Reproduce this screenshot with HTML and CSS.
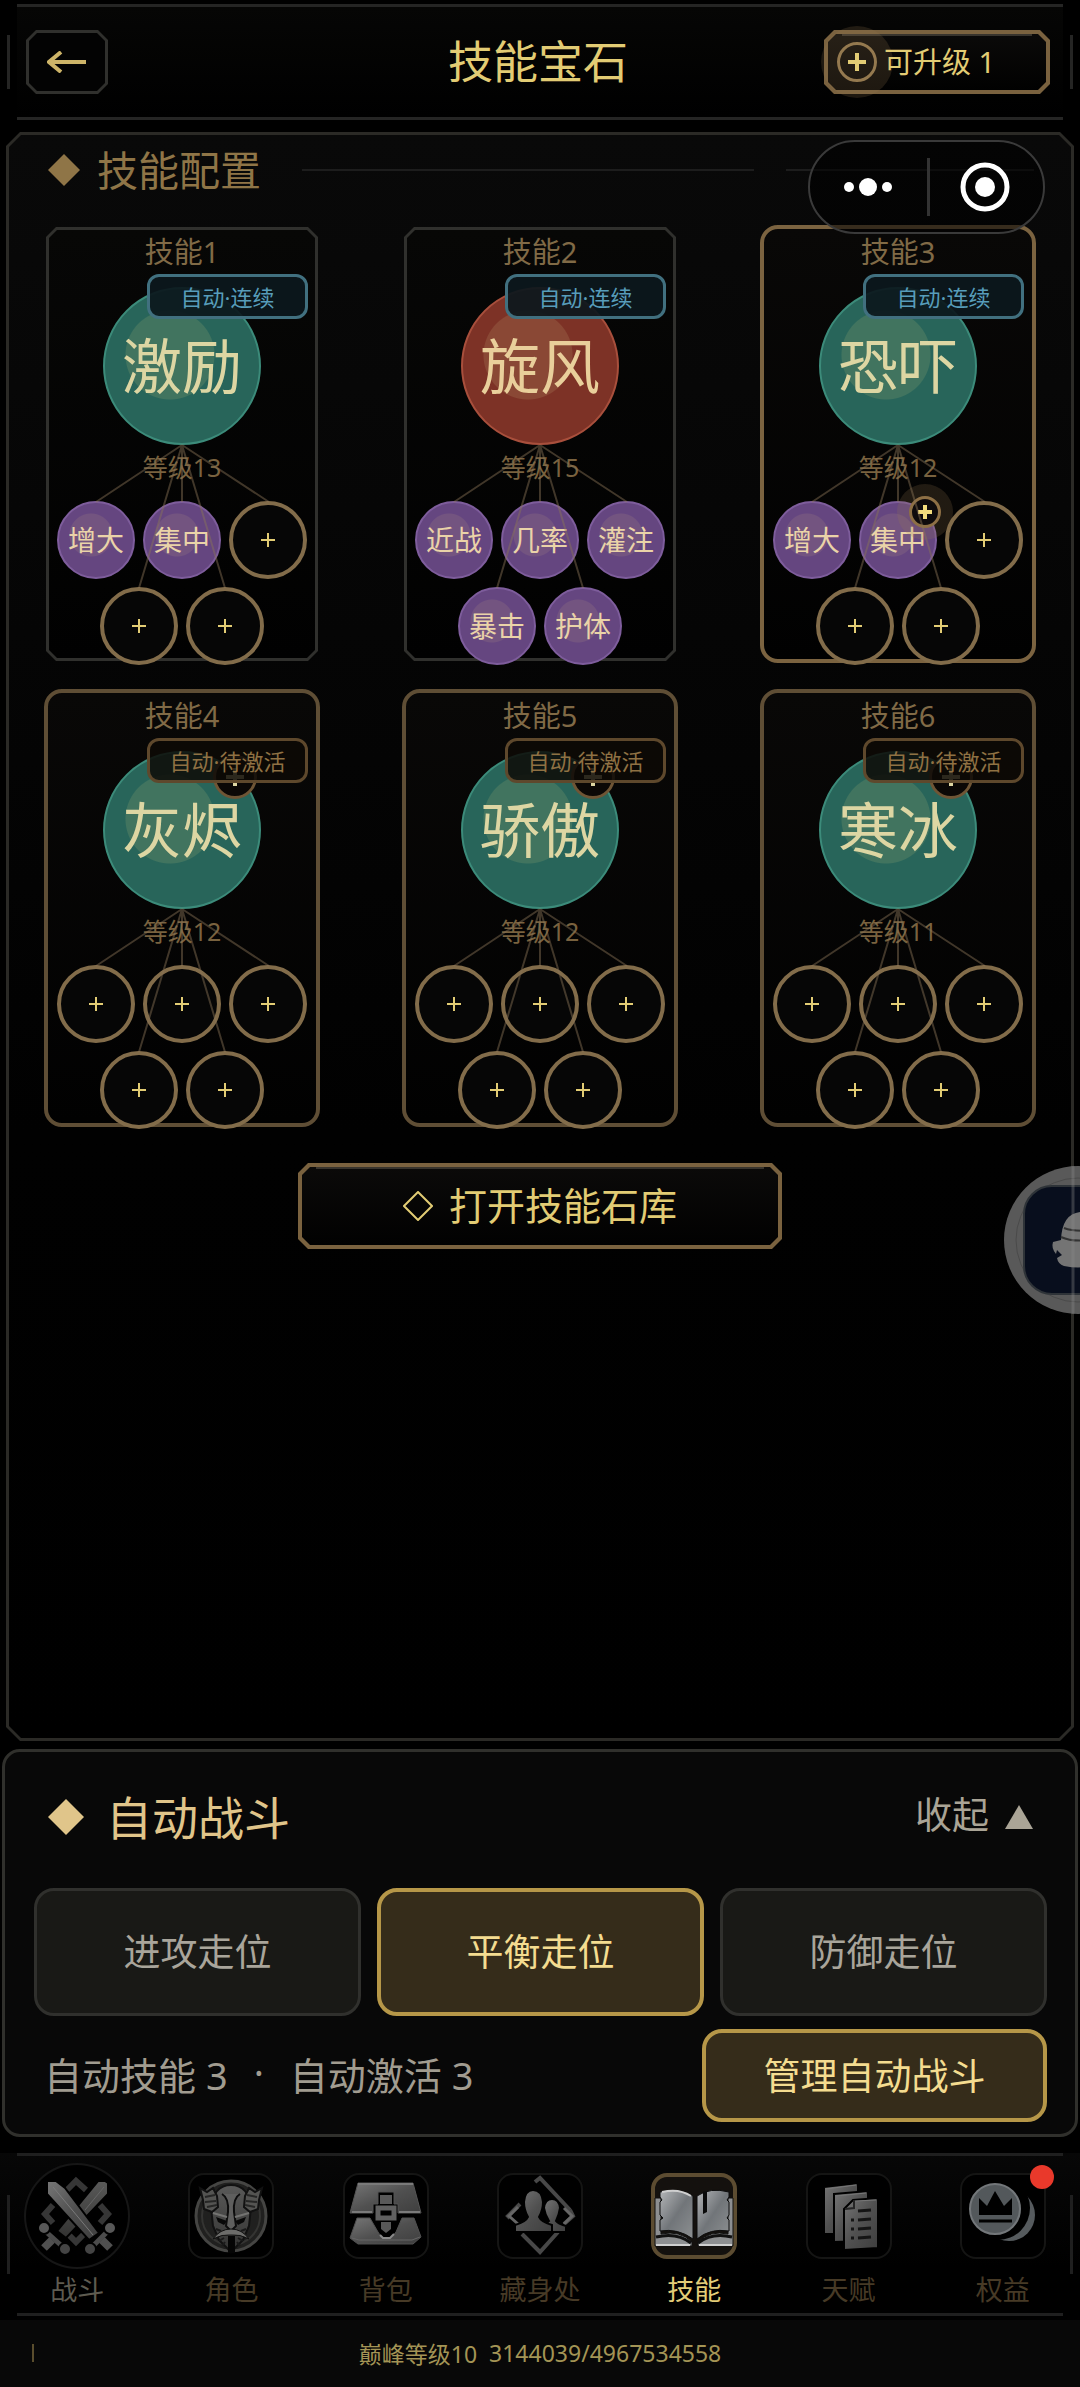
FILE: index.html
```html
<!DOCTYPE html>
<html lang="zh-CN">
<head>
  <meta charset="UTF-8" />
  <meta name="viewport" content="width=device-width, initial-scale=1" />
  <title>技能宝石</title>
  <link rel="stylesheet" href="styles.css">
</head>
<body>

  <!-- shared shapes -->
  <svg class="defs" aria-hidden="true">
    <defs>
      <linearGradient id="metal" x1="0" y1="0" x2="1" y2="1">
        <stop offset="0" stop-color="#767676" />
        <stop offset="0.5" stop-color="#505050" />
        <stop offset="1" stop-color="#3e3e3e" />
      </linearGradient>
      <linearGradient id="dim" x1="0" y1="0" x2="0" y2="1">
        <stop offset="0" stop-color="#5a5a59" />
        <stop offset="1" stop-color="#323231" />
      </linearGradient>
      <linearGradient id="bright" x1="0" y1="0" x2="1" y2="1">
        <stop offset="0" stop-color="#b4b6b8" />
        <stop offset="0.5" stop-color="#717579" />
        <stop offset="1" stop-color="#8d9092" />
      </linearGradient>
    </defs>
    <symbol id="links" viewBox="0 0 272 434">
      <path d="M136 218L50 275M136 218L223 275M136 218V275M136 218L93 361M136 218L179 361" fill="none" stroke="#8a7457" stroke-opacity="0.46" stroke-width="2" />
    </symbol>
    <symbol id="plus" viewBox="0 0 14 14">
      <path d="M7 0V14M0 7H14" fill="none" stroke="currentColor" stroke-width="2" />
    </symbol>
    <symbol id="plus-bold" viewBox="0 0 14 14">
      <path d="M7 0V14M0 7H14" fill="none" stroke="currentColor" stroke-width="4" />
    </symbol>
    <symbol id="plus-mid" viewBox="0 0 18 18">
      <path d="M9 0V18M0 9H18" fill="none" stroke="currentColor" stroke-width="4" />
    </symbol>
  </svg>

  <div class="app">

    <header class="topbar">
      <button class="back cut" aria-label="返回">
        <svg width="40" height="22" viewBox="0 0 40 22"><path d="M39 11H2M14 1L2 11L14 21" fill="none" stroke="currentColor" stroke-width="4" /></svg>
      </button>
      <h1>技能宝石</h1>
      <button class="upgrade cut gold">
        <span class="up-mark"><svg width="18" height="18"><use href="#plus-mid" /></svg></span>
        <span class="label">可升级 1</span>
      </button>
    </header>

    <main class="panel cut">
      <div class="section-head">
        <svg width="32" height="32" viewBox="0 0 32 32"><path d="M16 0L32 16L16 32L0 16Z" fill="currentColor" /></svg>
        <h2>技能配置</h2>
        <span class="rule"></span>
        <span class="rule short"></span>
      </div>

      <div class="cards">

        <section class="card cut">
          <h3>技能1</h3>
          <span class="badge auto">自动·连续</span>
          <button class="gem green">激励</button>
          <p class="level">等级13</p>
          <div class="sockets">
            <div class="row">
              <button class="socket filled">增大</button>
              <button class="socket filled">集中</button>
              <button class="socket" aria-label="添加"><svg width="14" height="14"><use href="#plus" /></svg></button>
            </div>
            <div class="row">
              <button class="socket" aria-label="添加"><svg width="14" height="14"><use href="#plus" /></svg></button>
              <button class="socket" aria-label="添加"><svg width="14" height="14"><use href="#plus" /></svg></button>
            </div>
          </div>
          <svg class="links"><use href="#links" /></svg>
        </section>

        <section class="card cut">
          <h3>技能2</h3>
          <span class="badge auto">自动·连续</span>
          <button class="gem red">旋风</button>
          <p class="level">等级15</p>
          <div class="sockets">
            <div class="row">
              <button class="socket filled">近战</button>
              <button class="socket filled">几率</button>
              <button class="socket filled">灌注</button>
            </div>
            <div class="row">
              <button class="socket filled">暴击</button>
              <button class="socket filled">护体</button>
            </div>
          </div>
          <svg class="links"><use href="#links" /></svg>
        </section>

        <section class="card round hot">
          <h3>技能3</h3>
          <span class="badge auto">自动·连续</span>
          <button class="gem green">恐吓</button>
          <p class="level">等级12</p>
          <div class="sockets">
            <div class="row">
              <button class="socket filled">增大</button>
              <button class="socket filled">集中
                <span class="socket-up"><svg width="14" height="14"><use href="#plus-bold" /></svg></span>
              </button>
              <button class="socket" aria-label="添加"><svg width="14" height="14"><use href="#plus" /></svg></button>
            </div>
            <div class="row">
              <button class="socket" aria-label="添加"><svg width="14" height="14"><use href="#plus" /></svg></button>
              <button class="socket" aria-label="添加"><svg width="14" height="14"><use href="#plus" /></svg></button>
            </div>
          </div>
          <svg class="links"><use href="#links" /></svg>
        </section>

        <section class="card round">
          <h3>技能4</h3>
          <span class="badge">自动·待激活</span>
          <button class="gem green">灰烬
            <span class="gem-up"><svg width="18" height="18"><use href="#plus-mid" /></svg></span>
          </button>
          <p class="level">等级12</p>
          <div class="sockets">
            <div class="row">
              <button class="socket" aria-label="添加"><svg width="14" height="14"><use href="#plus" /></svg></button>
              <button class="socket" aria-label="添加"><svg width="14" height="14"><use href="#plus" /></svg></button>
              <button class="socket" aria-label="添加"><svg width="14" height="14"><use href="#plus" /></svg></button>
            </div>
            <div class="row">
              <button class="socket" aria-label="添加"><svg width="14" height="14"><use href="#plus" /></svg></button>
              <button class="socket" aria-label="添加"><svg width="14" height="14"><use href="#plus" /></svg></button>
            </div>
          </div>
          <svg class="links"><use href="#links" /></svg>
        </section>

        <section class="card round">
          <h3>技能5</h3>
          <span class="badge">自动·待激活</span>
          <button class="gem green">骄傲
            <span class="gem-up"><svg width="18" height="18"><use href="#plus-mid" /></svg></span>
          </button>
          <p class="level">等级12</p>
          <div class="sockets">
            <div class="row">
              <button class="socket" aria-label="添加"><svg width="14" height="14"><use href="#plus" /></svg></button>
              <button class="socket" aria-label="添加"><svg width="14" height="14"><use href="#plus" /></svg></button>
              <button class="socket" aria-label="添加"><svg width="14" height="14"><use href="#plus" /></svg></button>
            </div>
            <div class="row">
              <button class="socket" aria-label="添加"><svg width="14" height="14"><use href="#plus" /></svg></button>
              <button class="socket" aria-label="添加"><svg width="14" height="14"><use href="#plus" /></svg></button>
            </div>
          </div>
          <svg class="links"><use href="#links" /></svg>
        </section>

        <section class="card round">
          <h3>技能6</h3>
          <span class="badge">自动·待激活</span>
          <button class="gem green">寒冰
            <span class="gem-up"><svg width="18" height="18"><use href="#plus-mid" /></svg></span>
          </button>
          <p class="level">等级11</p>
          <div class="sockets">
            <div class="row">
              <button class="socket" aria-label="添加"><svg width="14" height="14"><use href="#plus" /></svg></button>
              <button class="socket" aria-label="添加"><svg width="14" height="14"><use href="#plus" /></svg></button>
              <button class="socket" aria-label="添加"><svg width="14" height="14"><use href="#plus" /></svg></button>
            </div>
            <div class="row">
              <button class="socket" aria-label="添加"><svg width="14" height="14"><use href="#plus" /></svg></button>
              <button class="socket" aria-label="添加"><svg width="14" height="14"><use href="#plus" /></svg></button>
            </div>
          </div>
          <svg class="links"><use href="#links" /></svg>
        </section>

      </div>

      <button class="open-store cut gold">
        <svg width="30" height="30" viewBox="0 0 30 30"><path d="M15 1L29 15L15 29L1 15Z" fill="none" stroke="currentColor" stroke-width="2" /></svg>
        <span class="label">打开技能石库</span>
      </button>
    </main>

    <section class="battle">
      <div class="battle-head">
        <svg width="36" height="36" viewBox="0 0 36 36"><path d="M18 0L36 18L18 36L0 18Z" fill="currentColor" /></svg>
        <h2>自动战斗</h2>
        <button class="collapse"><span class="label">收起</span>
          <svg width="28" height="24" viewBox="0 0 28 24"><path d="M14 0L28 24H0Z" fill="currentColor" /></svg>
        </button>
      </div>
      <div class="stances">
        <button class="stance">进攻走位</button>
        <button class="stance active">平衡走位</button>
        <button class="stance">防御走位</button>
      </div>
      <div class="battle-foot">
        <p><span>自动技能 3</span><span>·</span><span>自动激活 3</span></p>
        <button class="manage">管理自动战斗</button>
      </div>
    </section>

    <nav class="tabs">
      <a href="#battle" class="tab first">
        <span class="tab-icon">
          <svg width="84" height="84" viewBox="0 0 84 84">
            <path d="M32 16L41 7L51 16M18 31L10 40L18 49M65 31L73 40L65 49M32 59L41 68L50 59" fill="none" stroke="#363636" stroke-width="6" />
            <g stroke="#000" stroke-width="2">
              <path d="M73 9V20L31 64L22 57L63 7L70 7Z" fill="url(#dim)" />
              <path d="M9 56L29 74" stroke="#4c4c4c" stroke-width="5" />
              <circle cx="9" cy="54" r="6" fill="#585858" /><circle cx="30" cy="75" r="6" fill="#444" />
              <path d="M17 66L9 74" stroke="#505050" stroke-width="8" />
              <path d="M12 7H21L30 14L64 59L54 66L12 20Z" fill="url(#metal)" />
              <path d="M56 74L74 56" stroke="#4c4c4c" stroke-width="5" />
              <circle cx="55" cy="75" r="6" fill="#444" /><circle cx="75" cy="54" r="6" fill="#585858" />
              <path d="M67 66L75 74" stroke="#505050" stroke-width="8" />
            </g>
            <path d="M18 13L58 61" stroke="#7a7a7a" stroke-width="1" />
            <path d="M69 13L50 36" stroke="#666" stroke-width="1" />
          </svg>
        </span>
        战斗
      </a>
      <a href="#role" class="tab">
        <span class="tab-icon">
          <svg width="84" height="84" viewBox="0 0 84 84">
            <circle cx="42" cy="42" r="35" fill="#20201f" stroke="#454543" stroke-width="3" />
            <circle cx="42" cy="42" r="29" fill="none" stroke="#343432" stroke-width="2" />
            <path d="M42 11C54 11 61 20 62 33L60 52L54 66L42 78L30 66L24 52L22 33C23 20 30 11 42 11Z" fill="url(#dim)" stroke="#111" stroke-width="2" />
            <path d="M11 14L18 18L24 14L28 22L29 33L23 38L15 35L14 26ZM73 14L66 18L60 14L56 22L55 33L61 38L69 35L70 26Z" fill="#545452" stroke="#111" stroke-width="2" />
            <path d="M16 23L26 21M16 28L27 27M18 33L28 31M68 23L58 21M68 28L57 27M66 33L56 31" stroke="#262625" stroke-width="2" />
            <path d="M33 20Q40 24 39 38L37 52L42 57L47 52L45 38Q44 24 51 20" fill="#5f5f5e" stroke="#0d0d0d" stroke-width="2" />
            <path d="M27 43L38 47L35 51L29 48ZM57 43L46 47L49 51L55 48Z" fill="#080808" />
            <path d="M24 39L38 43M60 39L46 43" stroke="#737371" stroke-width="2" />
            <path d="M24 65Q31 55 42 55Q53 55 60 65Q51 60 42 61Q33 60 24 65Z" fill="#6c6c6a" stroke="#111" stroke-width="1" />
            <path d="M27 55L32 57M57 55L52 57M30 67L35 64M54 67L49 64M33 72L36 68M51 72L48 68" stroke="#1a1a1a" stroke-width="2" />
            <path d="M39 62H46V79H39Z" fill="#050505" />
          </svg>
        </span>
        角色
      </a>
      <a href="#bag" class="tab">
        <span class="tab-icon">
          <svg width="84" height="84" viewBox="0 0 84 84">
            <path d="M14 9H69L77 39H54V30H50V18H34V30H29V39H6Z" fill="url(#metal)" stroke="#555" stroke-width="1" />
            <path d="M13 44H26L34 58L38 64H47L52 58L58 44H70L77 63L69 70H14L6 64Z" fill="url(#metal)" stroke="#505050" stroke-width="1" />
            <path d="M14 10H69M8 38H28M55 38H76" fill="none" stroke="#7a7a7a" stroke-width="2" />
            <path d="M8 64L15 66H68L76 63" fill="none" stroke="#666" stroke-width="1" />
            <path d="M36 21H48V30H36ZM37 48H47V55L42 59L37 55Z" fill="#595959" />
            <path d="M34 34H50V44H34Z" fill="#000" stroke="#606060" stroke-width="5" />
            <path d="M36 61L39 64H46L50 60" fill="none" stroke="#8a8a8a" stroke-width="2" />
          </svg>
        </span>
        背包
      </a>
      <a href="#hideout" class="tab">
        <span class="tab-icon">
          <svg width="84" height="84" viewBox="0 0 84 84">
            <path d="M37 8L42 4L72 36M12 44L10 42L22 30M72 36L75 42L66 50M60 58L42 78L24 60" fill="none" stroke="#484848" stroke-width="4" />
            <path d="M20 33L11 42L20 50M66 34L74 42L66 50" fill="none" stroke="#666" stroke-width="3" />
            <g fill="url(#metal)" stroke="#000" stroke-width="2">
              <path d="M46 58Q47 50 51 47Q47 41 46 34Q47 25 54 25Q61 25 62 34Q61 41 58 47Q60 50 68 52V58Z" />
              <path d="M17 58V51Q28 48 30 43Q26 36 26 28Q27 16 35 16Q44 16 45 28Q45 36 41 43Q43 48 54 51V58Z" />
            </g>
          </svg>
        </span>
        藏身处
      </a>
      <a href="#skill" class="tab active" aria-current="page">
        <span class="tab-icon">
          <svg width="84" height="84" viewBox="0 0 84 84">
            <path d="M3 24H9V60Q28 56 40 68V72H3ZM81 24H76V60Q58 56 46 68V72H81Z" fill="#8d8f91" stroke="#111" stroke-width="1" />
            <path d="M8 18Q27 13 41 22V65Q26 54 8 57V46L11 44L8 41V28L10 26L8 23Z" fill="url(#bright)" stroke="#0d0d0d" stroke-width="1" />
            <path d="M77 18Q58 13 45 22V65Q58 54 77 57V46L75 44L77 41V28L75 26L77 23Z" fill="url(#bright)" stroke="#0d0d0d" stroke-width="1" />
            <path d="M51 18L55 17V38L51 40Z" fill="#0a0a0a" />
            <path d="M4 63Q25 58 39 69M80 63Q60 58 46 69" fill="none" stroke="#111" stroke-width="3" />
            <path d="M10 18Q27 14 39 22M4 71H38M47 71H80" fill="none" stroke="#cfcfcf" stroke-width="2" />
          </svg>
        </span>
        技能
      </a>
      <a href="#talent" class="tab">
        <span class="tab-icon">
          <svg width="84" height="84" viewBox="0 0 84 84">
            <g fill="url(#metal)" stroke="#000" stroke-width="2">
              <path d="M17 13L51 9V60L17 60Z" />
              <path d="M27 20L61 17V67L27 68Z" />
              <path d="M37 35L46 26L71 24V74L37 76Z" />
            </g>
            <path d="M38 35L47 34V26" fill="none" stroke="#252525" stroke-width="2" />
            <path d="M51 37L64 36M51 46L64 45M51 55L64 54M51 64L64 63M44 46H47M44 55H47M44 64H47" fill="none" stroke="#151515" stroke-width="3" />
            <path d="M19 15L49 11M29 22L59 19M48 27L69 26" stroke="#777" stroke-width="1" />
          </svg>
        </span>
        天赋
      </a>
      <a href="#vip" class="tab">
        <span class="tab-icon">
          <svg width="84" height="84" viewBox="0 0 84 84">
            <circle cx="48" cy="41" r="26" fill="#565b5e" />
            <circle cx="37" cy="34" r="32" fill="#000" />
            <circle cx="34" cy="35" r="25" fill="#53585b" stroke="#73777a" stroke-width="2" />
            <path d="M18 24L26 32L34 17L43 32L51 24V41H18Z" fill="#000" />
            <path d="M18 47H51" stroke="#000" stroke-width="3" />
          </svg>
          <span class="dot"></span>
        </span>
        权益
      </a>
    </nav>

    <footer class="status">
      <span class="tick"></span>
      <span>巅峰等级10</span>
      <span>3144039/4967534558</span>
    </footer>
  </div>

  <div class="capsule">
    <button aria-label="更多">
      <svg width="50" height="20" viewBox="0 0 50 20" fill="#fff"><circle cx="6" cy="10" r="5" /><circle cx="25" cy="10" r="9" /><circle cx="44" cy="10" r="5" /></svg>
    </button>
    <button aria-label="关闭">
      <svg width="50" height="50" viewBox="0 0 50 50"><circle cx="25" cy="25" r="22" fill="none" stroke="#fff" stroke-width="5" /><circle cx="25" cy="25" r="10" fill="#fff" /></svg>
    </button>
  </div>

  <button class="orb" aria-label="助手">
    <svg width="148" height="148" viewBox="0 0 148 148">
      <circle cx="74" cy="74" r="74" fill="#595959" />
      <circle cx="74" cy="74" r="62" fill="none" stroke="#4a4a4a" stroke-width="1" />
      <rect x="20" y="20" width="108" height="108" rx="28" fill="#080e1d" stroke="#2e3338" stroke-width="2" />
      <path d="M57 74Q58 48 76 46Q92 48 93 74L96 90L88 98Q80 104 60 100Q54 98 53 92L58 89L53 84L52 88Q47 82 49 76Z" fill="#747474" />
      <path d="M60 62Q70 66 90 64M57 71Q70 77 92 73" fill="none" stroke="#333" stroke-width="2" />
      <path d="M69 0V148" stroke="#8a8a8a" stroke-opacity="0.35" stroke-width="3" />
    </svg>
  </button>

</body>
</html>
```
FILE: styles.css
```css
* {
  box-sizing: border-box;
}

html, body {
  margin: 0;
  padding: 0;
  min-height: 100%;
  background: #000;
  font-family: "Noto Sans", "Noto Sans CJK SC", sans-serif;
  color: #e2cc74;
}

h1, h2, h3, p {
  margin: 0;
  font-weight: 400;
}

button {
  margin: 0;
  padding: 0;
  border: none;
  background: none;
  font-family: inherit;
  color: inherit;
  cursor: pointer;
}

svg {
  display: block;
  flex-shrink: 0;
}

.defs {
  position: absolute;
  width: 0;
  height: 0;
}

.app {
  display: flex;
  flex-direction: column;
  min-height: 100vh;
}

.label {
  padding-bottom: 4px;
}

/* frame with chamfered corners */
.cut {
  --cut: 10px;
  --inner: 8px;
  --line: 3px;
  --edge: #30302d;
  --fill: #030303;
  position: relative;
  isolation: isolate;
}

.cut::before, .cut::after {
  content: "";
  position: absolute;
  z-index: -1;
  clip-path: polygon(var(--c) 0, calc(100% - var(--c)) 0, 100% var(--c), 100% calc(100% - var(--c)), calc(100% - var(--c)) 100%, var(--c) 100%, 0 calc(100% - var(--c)), 0 var(--c));
}

.cut::before {
  --c: var(--cut);
  inset: 0;
  background: var(--edge);
}

.cut::after {
  --c: var(--inner);
  inset: var(--line);
  background: var(--fill);
}

.cut.gold {
  --line: 4px;
  --edge: #7a623f;
  --fill: linear-gradient(#38342d, #38342d) center top / calc(100% - 28px) 2px no-repeat, linear-gradient(#0b0a09, #010101);
}

/* top bar */
.topbar {
  position: relative;
  display: grid;
  grid-template-columns: 1fr auto 1fr;
  align-items: center;
  margin: 4px 17px 0;
  padding: 23px 13px 23px 9px;
  border-top: 3px solid #252524;
  border-bottom: 3px solid #252524;
  background: linear-gradient(#060605, #000);
}

.topbar::before, .topbar::after,
.tabs::before, .tabs::after {
  content: "";
  position: absolute;
  top: 28px;
  bottom: 28px;
  width: 3px;
  background: #252524;
}

.topbar::before {
  left: -10px;
}

.topbar::after {
  right: -10px;
}

.topbar h1 {
  font-size: 45px;
  line-height: 60px;
}

.back {
  display: flex;
  align-items: center;
  justify-content: center;
  width: 82px;
  height: 64px;
  color: #cdb468;
}

.upgrade {
  justify-self: end;
  display: flex;
  align-items: center;
  gap: 7px;
  width: 226px;
  height: 64px;
  padding-left: 13px;
  font-size: 29px;
}

.up-mark {
  display: flex;
  align-items: center;
  justify-content: center;
  width: 40px;
  height: 40px;
  border: 3px solid #94794f;
  border-radius: 50%;
  box-shadow: 0 0 0 16px rgba(148, 121, 79, 0.2);
  background: rgba(148, 121, 79, 0.2);
}

/* skill panel */
.panel {
  --cut: 14px;
  --inner: 12px;
  --edge: #2b2a26;
  --fill: linear-gradient(#090909, #050505 500px, #010101 1000px, #000);
  flex: 1;
  margin: 12px 6px 0;
  padding: 8px 40px 40px;
}

.section-head {
  display: flex;
  align-items: center;
  padding-left: 2px;
  color: #8f7547;
}

.section-head h2 {
  margin: 0 41px 0 17px;
  font-size: 41px;
  line-height: 60px;
}

.rule {
  flex: 1;
  height: 2px;
  background: #1d1d1d;
}

.rule.short {
  flex: none;
  width: 248px;
  margin-left: 32px;
}

.cards {
  display: grid;
  grid-template-columns: repeat(3, 272px);
  justify-content: space-between;
  row-gap: 30px;
  margin-top: 27px;
}

.card {
  position: relative;
  isolation: isolate;
  display: flex;
  flex-direction: column;
  align-items: center;
  padding-top: 9px;
}

.card.cut {
  --fill: linear-gradient(#070706, #010101);
}

.card.round::before {
  content: "";
  position: absolute;
  z-index: -1;
  inset: -2px;
  border: 4px solid #5f4e35;
  border-radius: 18px;
  background: linear-gradient(#090807, #010101);
}

.card.hot::before {
  border-color: #7b6340;
}

.card h3 {
  font-size: 29px;
  line-height: 32px;
  color: #806a46;
}

.badge {
  position: absolute;
  z-index: 2;
  top: 47px;
  right: 10px;
  display: flex;
  align-items: center;
  justify-content: center;
  width: 161px;
  height: 45px;
  padding-bottom: 2px;
  border: 3px solid #5e482c;
  border-radius: 12px;
  background: rgba(13, 9, 6, 0.85);
  font-size: 22px;
  color: #8f7143;
}

.badge.auto {
  border-color: #41707f;
  background: rgba(12, 24, 29, 0.93);
  color: #579dba;
}

.gem {
  position: relative;
  width: 158px;
  height: 158px;
  margin-top: 19px;
  border: 2px solid #3c8b7a;
  border-radius: 50%;
  background: radial-gradient(circle at 65px 66px, #41745f 44px, #28655a 45px);
  font-size: 60px;
  line-height: 150px;
  color: #ddd6a3;
}

.gem.red {
  border-color: #a84f3c;
  background: radial-gradient(circle at 65px 66px, #8a4835 44px, #7d3226 45px);
  color: #e9cf9b;
}

.gem-up {
  position: absolute;
  top: 2px;
  right: 2px;
  display: flex;
  align-items: center;
  justify-content: center;
  width: 44px;
  height: 44px;
  border: 3px solid #6f5535;
  border-radius: 50%;
  background: #0b0806;
}

.level {
  margin-top: 6px;
  font-size: 25px;
  line-height: 32px;
  color: #79623f;
}

.sockets {
  display: grid;
  gap: 8px;
  margin: 18px 0 -4px;
}

.row {
  display: flex;
  justify-content: center;
  gap: 8px;
}

.socket {
  position: relative;
  display: flex;
  align-items: center;
  justify-content: center;
  width: 78px;
  height: 78px;
  border: 4px solid #826c4a;
  border-radius: 50%;
  background: #060606;
}

.socket.filled {
  padding-bottom: 3px;
  border: 2px solid #7e5d9c;
  background: radial-gradient(circle at 32px 32px, #735480 21px, #654680 22px);
  font-size: 28px;
  color: #ead3a8;
}

.socket-up {
  position: absolute;
  top: -7px;
  right: -6px;
  display: flex;
  align-items: center;
  justify-content: center;
  width: 32px;
  height: 32px;
  border: 3px solid #8d6f45;
  border-radius: 50%;
  background: #0f0b0c;
  box-shadow: 0 0 0 12px rgba(150, 122, 80, 0.2);
  color: #f3dc7c;
}

.links {
  position: absolute;
  top: 0;
  left: 0;
  width: 272px;
  height: 434px;
  pointer-events: none;
}

.open-store {
  display: flex;
  align-items: center;
  justify-content: center;
  gap: 16px;
  width: 484px;
  height: 86px;
  margin: 38px auto 0;
  font-size: 38px;
}

.open-store .label {
  padding-bottom: 6px;
}

/* auto battle */
.battle {
  margin: 8px 2px 0;
  padding: 35px 28px 12px 29px;
  border: 3px solid #30302c;
  border-radius: 18px;
  background: #080808;
}

.battle-head {
  display: flex;
  align-items: center;
  padding: 0 14px;
  color: #e0c58a;
}

.battle-head h2 {
  margin-left: 22px;
  font-size: 46px;
  line-height: 60px;
}

.collapse {
  display: flex;
  align-items: center;
  gap: 16px;
  margin-left: auto;
  font-size: 37px;
  line-height: 48px;
  color: #aaa496;
}

.stances {
  display: grid;
  grid-template-columns: repeat(3, 1fr);
  gap: 16px;
  margin-top: 41px;
}

.stance {
  height: 128px;
  padding-bottom: 4px;
  border: 3px solid #30302d;
  border-radius: 20px;
  background: #191916;
  font-size: 37px;
  color: #a9a59b;
}

.stance.active, .manage {
  border: 4px solid #b69748;
  background: #352c1a;
  color: #f4dc90;
}

.battle-foot {
  display: flex;
  align-items: center;
  justify-content: space-between;
  margin-top: 13px;
}

.battle-foot p {
  display: flex;
  gap: 26px;
  padding: 0 0 4px 10px;
  font-size: 38px;
  color: #a19c90;
}

.manage {
  width: 345px;
  height: 93px;
  padding-bottom: 4px;
  border-radius: 20px;
  font-size: 37px;
}

/* bottom navigation */
.tabs {
  position: relative;
  display: grid;
  grid-template-columns: repeat(7, 1fr);
  margin-top: 16px;
  padding: 20px 0 7px;
  background:
    linear-gradient(#1f1f1f, #1f1f1f) center top / calc(100% - 34px) 3px no-repeat,
    linear-gradient(#1f1f1f, #1f1f1f) center bottom / calc(100% - 34px) 3px no-repeat,
    linear-gradient(#070707, #000 70%);
}

.tabs::before, .tabs::after {
  top: 42px;
  bottom: 42px;
  background: #1f1f1f;
}

.tabs::before {
  left: 7px;
}

.tabs::after {
  right: 7px;
}

.tab {
  display: flex;
  flex-direction: column;
  align-items: center;
  gap: 12px;
  font-size: 27px;
  line-height: 38px;
  color: #473a26;
  text-decoration: none;
}

.tab-icon {
  position: relative;
  display: flex;
  align-items: center;
  justify-content: center;
  width: 86px;
  height: 86px;
  border: 2px solid #151514;
  border-radius: 16px;
  background: #000;
}

.tab.first {
  color: #5e5b50;
}

.tab.first .tab-icon {
  border: none;
  border-radius: 50%;
  box-shadow: 0 0 0 8px #000, 0 0 0 10px #161616;
}

.tab.active {
  color: #e3cd78;
}

.tab.active .tab-icon {
  border: 4px solid #5c4c31;
  background: #14110e;
}

.dot {
  position: absolute;
  top: -10px;
  right: -10px;
  width: 24px;
  height: 24px;
  border-radius: 50%;
  background: #e9392b;
}

.status {
  position: relative;
  display: flex;
  align-items: center;
  justify-content: center;
  gap: 12px;
  height: 67px;
  margin-top: 4px;
  padding-bottom: 2px;
  background: #080808;
  font-size: 23px;
  color: #a39455;
}

.tick {
  position: absolute;
  left: 32px;
  width: 2px;
  height: 18px;
  background: #5a4d2d;
}

/* floating controls */
.capsule {
  position: absolute;
  top: 140px;
  right: 35px;
  display: flex;
  width: 237px;
  height: 94px;
  border: 2px solid #3a3a3a;
  border-radius: 47px;
  background: rgba(0, 0, 0, 0.55);
}

.capsule button {
  flex: 1;
  display: flex;
  align-items: center;
  justify-content: center;
}

.capsule button + button::before {
  content: "";
  position: absolute;
  left: 50%;
  width: 3px;
  height: 58px;
  background: #333;
}

.orb {
  position: fixed;
  top: 1166px;
  right: -72px;
}
```
